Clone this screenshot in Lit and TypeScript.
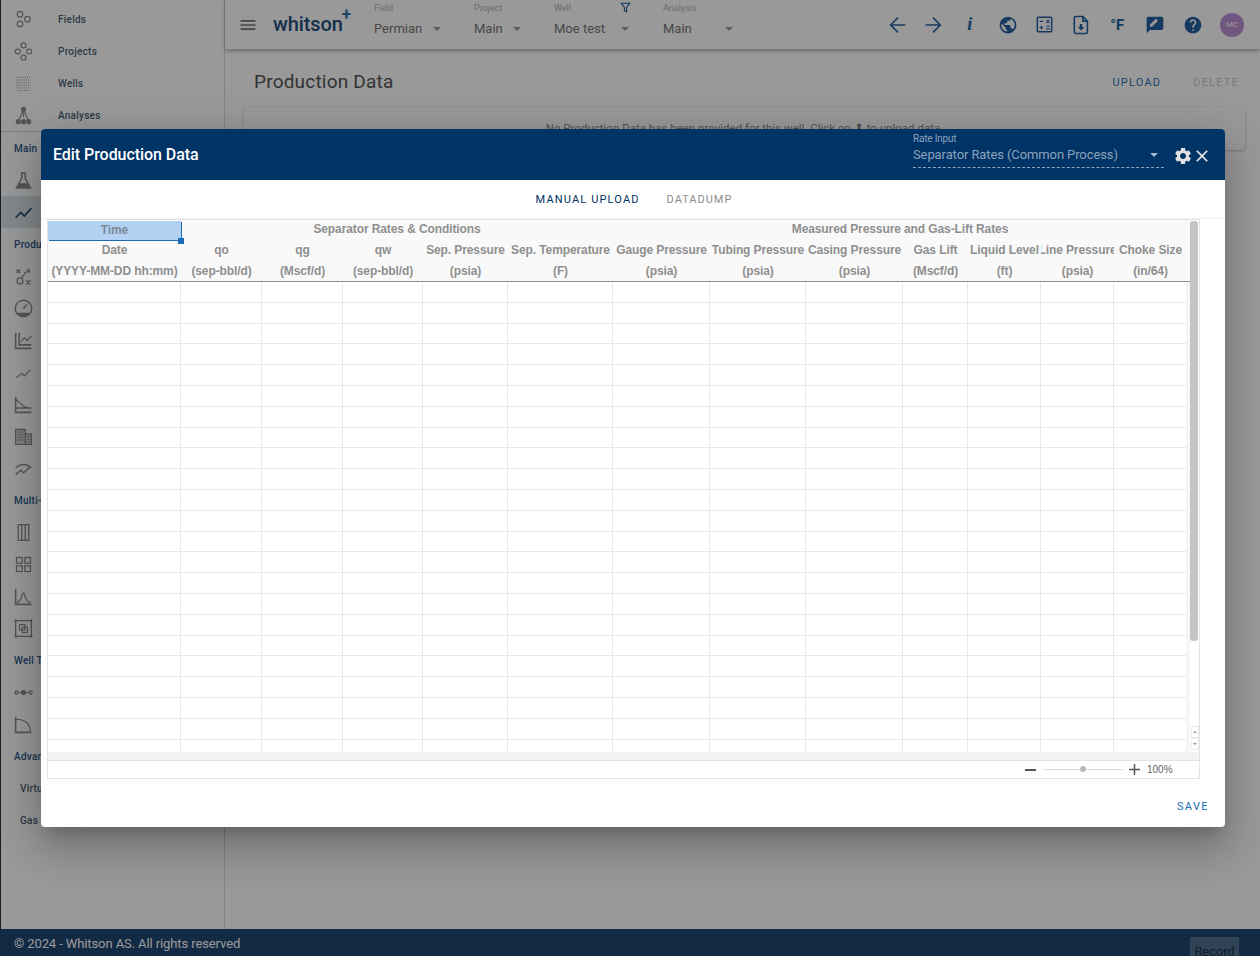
import { LitElement, html, css, svg, unsafeCSS } from "lit";
import { customElement } from "lit/decorators.js";

const ui = (d: unknown, size = 24, vb = "0 0 24 24") =>
  html`<svg class="ic" width=${size} height=${size} viewBox=${vb}>${d}</svg>`;

const MAT = {
  globe:
    "M12 2C6.48 2 2 6.48 2 12s4.48 10 10 10 10-4.48 10-10S17.52 2 12 2zm-1 17.93c-3.95-.49-7-3.85-7-7.93 0-.62.08-1.21.21-1.79L9 15v1c0 1.1.9 2 2 2v1.93zm6.9-2.54c-.26-.81-1-1.39-1.9-1.39h-1v-3c0-.55-.45-1-1-1H8v-2h2c.55 0 1-.45 1-1V7h2c1.1 0 2-.9 2-2v-.41c2.93 1.19 5 4.06 5 7.41 0 2.08-.8 3.97-2.1 5.39z",
  help: "M12 2C6.48 2 2 6.48 2 12s4.48 10 10 10 10-4.48 10-10S17.52 2 12 2zm1 17h-2v-2h2v2zm2.07-7.75l-.9.92C13.45 12.9 13 13.5 13 15h-2v-.5c0-1.1.45-2.1 1.17-2.83l1.24-1.26c.37-.36.59-.86.59-1.41 0-1.1-.9-2-2-2s-2 .9-2 2H8c0-2.21 1.79-4 4-4s4 1.79 4 4c0 .88-.36 1.68-.93 2.25z",
  gear: "M19.14 12.94c.04-.3.06-.61.06-.94 0-.32-.02-.64-.07-.94l2.03-1.58c.18-.14.23-.41.12-.61l-1.92-3.32c-.12-.22-.37-.29-.59-.22l-2.39.96c-.5-.38-1.03-.7-1.62-.94l-.36-2.54c-.04-.24-.24-.41-.48-.41h-3.84c-.24 0-.43.17-.47.41l-.36 2.54c-.59.24-1.13.57-1.62.94l-2.39-.96c-.22-.08-.47 0-.59.22L2.74 8.87c-.12.21-.08.47.12.61l2.03 1.58c-.05.3-.09.63-.09.94s.02.64.07.94l-2.03 1.58c-.18.14-.23.41-.12.61l1.92 3.32c.12.22.37.29.59.22l2.39-.96c.5.38 1.03.7 1.62.94l.36 2.54c.05.24.24.41.48.41h3.84c.24 0 .44-.17.47-.41l.36-2.54c.59-.24 1.13-.56 1.62-.94l2.39.96c.22.08.47 0 .59-.22l1.92-3.32c.12-.22.07-.47-.12-.61l-2.01-1.58zM12 15.6c-1.98 0-3.6-1.62-3.6-3.6s1.62-3.6 3.6-3.6 3.6 1.62 3.6 3.6-1.62 3.6-3.6 3.6z",
  close:
    "M19 6.41L17.59 5 12 10.59 6.41 5 5 6.41 10.59 12 5 17.59 6.41 19 12 13.41 17.59 19 19 17.59 13.41 12z",
  menu: "M3 18h18v-2H3v2zm0-5h18v-2H3v2zm0-7v2h18V6H3z",
  review:
    "M20 2H4c-1.1 0-2 .9-2 2v18l4-4h14c1.1 0 2-.9 2-2V4c0-1.1-.9-2-2-2zM6 14v-2.47l6.88-6.88c.2-.2.51-.2.71 0l1.77 1.77c.2.2.2.51 0 .71L8.47 14H6z",
};
const fill = (d: string) => svg`<path d=${d} fill="currentColor"></path>`;
const thin = (d: string) => svg`<path d=${d} fill="none" stroke="currentColor" stroke-width="1.7"></path>`;

const topIcons = [
  { w: 35, c: ui(thin("M20 12H4M12 4l-8 8 8 8"), 22) },
  { w: 35.5, c: ui(thin("M4 12h16M12 4l8 8-8 8"), 22) },
  { w: 37.5, c: html`<span class="ital">i</span>` },
  { w: 38, c: ui(fill(MAT.globe), 20) },
  {
    w: 36,
    c: ui(svg`<g fill="none" stroke="currentColor" stroke-width="1.7"><rect x="3.8" y="3.8" width="16.4" height="16.4" rx="1"></rect><path d="M6.5 8.5h4M14 7l3.5 3M17.5 7L14 10M6.5 15.5h4M8.5 13.5v4M14 14h4M14 17h4" stroke-width="1.4"></path></g>`, 21),
  },
  {
    w: 36,
    c: ui(svg`<path d="M6 2.8h8l5 5V20a1.3 1.3 0 0 1-1.3 1.3H6A1.3 1.3 0 0 1 4.7 20V4.1A1.3 1.3 0 0 1 6 2.8z M14 2.8v5h5" fill="none" stroke="currentColor" stroke-width="1.7"></path><path d="M10.7 11h2.6v3.3h2.2L12 18l-3.5-3.7h2.2z" fill="currentColor"></path>`, 22),
  },
  { w: 37.5, c: html`<span class="degf">°F</span>` },
  { w: 38, c: ui(fill(MAT.review), 20) },
  { w: 38.5, c: ui(fill(MAT.help), 20) },
  { w: 39, c: html`<span class="avatar">MC</span>` },
];

const selects = [
  { w: 100, label: "Field", value: "Permian", vw: 59 },
  { w: 80, label: "Project", value: "Main", vw: 39 },
  { w: 109, label: "Well", value: "Moe test", vw: 67, filter: true },
  { w: 80, label: "Analysis", value: "Main", vw: 62 },
];

const S = (inner: string) => svg`<g fill="none" stroke="currentColor" stroke-width="1.4" .innerHTML=${inner}></g>`;
const side = {
  fields: S('<circle cx="8" cy="6" r="3.2"/><circle cx="16.5" cy="11.5" r="3.2"/><circle cx="8" cy="17" r="3.2"/>'),
  projects: S('<circle cx="12" cy="5" r="2.8"/><circle cx="5.5" cy="12" r="2.8"/><circle cx="18.5" cy="12" r="2.8"/><circle cx="12" cy="19" r="2.8"/>'),
  wells: S('<path stroke-dasharray="1 1.2" stroke-width="1.1" d="M5 5h14M4 8h16M4 11h16M4 14h16M4 17h16M6 20h12"/>'),
  analyses: S('<path d="M12 5L6 19M12 5l6 14M12 5v9M9 12l-3 7M15 12l3 7" /><circle cx="12" cy="5" r="2.2" fill="currentColor"/><circle cx="6" cy="19" r="2.2" fill="currentColor"/><circle cx="12" cy="19" r="2.2" fill="currentColor"/><circle cx="18" cy="19" r="2.2" fill="currentColor"/>'),
  flask: S('<path stroke-width="1.8" d="M9 3.5h6M10 3.5v6L4 20.5h16L14 9.5v-6"/><path d="M7.5 15h9l2.5 5H5z" fill="currentColor" stroke="none"/>'),
  line: S('<path stroke-width="2" d="M3 18l6-6 4 4 8-9"/>'),
  trend: S('<path d="M4 18l6-5 3 3 7-7"/>'),
  xcurve: S('<path d="M4 4l4 4M8 4L4 8M15 16l5 5M20 16l-5 5M13 8l6-3M19 5l-2.5-1.5M19 5l-1 3"/><circle cx="8" cy="17" r="3.4"/><path d="M9.5 14L14 8"/>'),
  gauge: S('<circle cx="12" cy="12" r="9.5" stroke-width="1.6"/><path d="M12 12l4-5" stroke-width="1.6"/><path d="M5 17.5h14a9 9 0 0 1-14 0z" fill="currentColor"/>'),
  chart: S('<path stroke-width="1.8" d="M3 3v18h18M7 3v14h14"/><path d="M9 13l4-4 3 3 5-5"/>'),
  decline: S('<path stroke-width="1.8" d="M3 3v18h18"/><path d="M3 6l8 7q3 3 10 3M3 16h18" stroke-width="1.5"/>'),
  building: S('<path d="M3 21V4h11v17zM14 9h7v12h-7z" fill="currentColor" fill-opacity=".35" stroke-width="1.5"/><path stroke-width="1" d="M5 7h7M5 10h7M5 13h7M5 16h7M16 12h3M16 15h3M16 18h3"/>'),
  waves: S('<path stroke-width="1.6" d="M3 11q9-7 18 0M3 19l6-5 3 3 8-7"/>'),
  columns: S('<path stroke-width="1.5" d="M6 3h12v18H6zM10 3v18M14 3v18"/>'),
  grid4: S('<rect x="4" y="4" width="6.5" height="6.5"/><rect x="13.5" y="4" width="6.5" height="6.5"/><rect x="4" y="13.5" width="6.5" height="6.5"/><rect x="13.5" y="13.5" width="6.5" height="6.5"/>'),
  bell: S('<path stroke-width="1.8" d="M3 3v18h18"/><path stroke-width="1.4" d="M4 19q4-1 6-7t3-3q2 9 7 10"/>'),
  frame: S('<path stroke-width="1.5" d="M3 3h18v18H3z"/><rect x="7.5" y="7.5" width="6" height="6"/><rect x="10.5" y="10.5" width="6" height="6"/><path stroke-width="3" d="M2 3h2M20 3h2M2 21h2M20 21h2"/>'),
  chain: S('<circle cx="4" cy="12" r="1.8"/><circle cx="12" cy="12" r="2.2" fill="currentColor"/><circle cx="20" cy="12" r="1.8"/><path d="M6 12h4M14 12h4"/>'),
  quarter: S('<path stroke-width="1.8" d="M3 3v18h18"/><path d="M3 6q16 0 17 14"/>'),
};

const nav: Array<{ t: "item" | "head" | "text"; icon?: unknown; label?: string; active?: boolean }> = [
  { t: "item", icon: side.fields, label: "Fields" },
  { t: "item", icon: side.projects, label: "Projects" },
  { t: "item", icon: side.wells, label: "Wells" },
  { t: "item", icon: side.analyses, label: "Analyses" },
];
const nav2: typeof nav = [
  { t: "head", label: "Main" },
  { t: "item", icon: side.flask },
  { t: "item", icon: side.line, active: true },
  { t: "head", label: "Production" },
  { t: "item", icon: side.xcurve },
  { t: "item", icon: side.gauge },
  { t: "item", icon: side.chart },
  { t: "item", icon: side.trend },
  { t: "item", icon: side.decline },
  { t: "item", icon: side.building },
  { t: "item", icon: side.waves },
  { t: "head", label: "Multi-Well" },
  { t: "item", icon: side.columns },
  { t: "item", icon: side.grid4 },
  { t: "item", icon: side.bell },
  { t: "item", icon: side.frame },
  { t: "head", label: "Well Tests" },
  { t: "item", icon: side.chain },
  { t: "item", icon: side.quarter },
  { t: "head", label: "Advanced" },
  { t: "text", label: "Virtual" },
  { t: "text", label: "Gas" },
];

const COLS = [133, 81, 81, 80, 85, 105, 97, 96, 97, 65, 73, 73, 73];
const COLTPL = unsafeCSS(COLS.map((c) => c + "px").join(" "));
const H2 = ["Date", "qo", "qg", "qw", "Sep. Pressure", "Sep. Temperature", "Gauge Pressure", "Tubing Pressure", "Casing Pressure", "Gas Lift", "Liquid Level", "Line Pressure", "Choke Size"];
const H3 = ["(YYYY-MM-DD hh:mm)", "(sep-bbl/d)", "(Mscf/d)", "(sep-bbl/d)", "(psia)", "(F)", "(psia)", "(psia)", "(psia)", "(Mscf/d)", "(ft)", "(psia)", "(in/64)"];

@customElement("app-root")
export class AppRoot extends LitElement {
  static styles = css`
    :host {
      display: block;
      position: relative;
      width: 1260px;
      height: 956px;
      overflow: hidden;
      background: #fff;
      font-family: Roboto, "Liberation Sans", sans-serif;
    }
    .ic { display: block; }
    .page { display: flex; flex-direction: column; height: 956px; }
    .body { flex: 1; display: flex; min-height: 0; }
    .sidebar {
      width: 225px;
      box-sizing: border-box;
      border-left: 1px solid #303030;
      border-right: 1px solid #d5d5d5;
      padding-top: 3px;
      color: #555;
      flex: none;
    }
    .sidebar .group { border-bottom: 1px solid #cfcfcf; }
    .nav-item { height: 32px; display: flex; align-items: center; padding-left: 11.5px; gap: 24.5px; color: #8f8b8b; }
    .nav-item .ic { width: 21px; height: 21px; }
    .nav-item.active { background: #dde5eb; color: #24507f; }
    .nav-label { font-size: 10px; font-weight: 500; letter-spacing: 0.25px; color: #4d5f76; }
    .nav-head { height: 32px; display: flex; align-items: center; padding-left: 13px; font-size: 10px; font-weight: 500; letter-spacing: 0.25px; color: #2c5a8d; white-space: nowrap; }
    .nav-text { height: 32px; display: flex; align-items: center; padding-left: 19px; font-size: 10px; font-weight: 500; letter-spacing: 0.25px; color: #4d5f76; }
    .main { flex: 1; min-width: 0; display: flex; flex-direction: column; }
    .topbar {
      height: 49px;
      flex: none;
      display: flex;
      align-items: center;
      background: #fff;
      box-shadow: 0 2px 4px rgba(0, 0, 0, 0.3);
      padding-left: 11px;
      color: #25619e;
    }
    .burger { color: #777; width: 24px; margin-right: 13px; display: flex; justify-content: center; }
    .logo { width: 101px; display: flex; align-items: flex-start; height: 49px; color: #254f80; }
    .logo-word { font-size: 20px; font-weight: 500; letter-spacing: -0.1px; margin-top: 12px; color: #254f80; }
    .logo-plus { font-size: 17px; font-weight: 700; margin-top: 6px; margin-left: -1px; color: #2a70b0; line-height: 1; }
    .sel { position: relative; height: 49px; flex: none; }
    .sel-label { font-size: 9px; color: #b4b4b4; line-height: 12px; margin-top: 2px; }
    .sel-row { display: flex; align-items: center; margin-top: 7px; font-size: 13px; color: #777; line-height: 16px; }
    .caret { width: 0; height: 0; border-left: 4px solid transparent; border-right: 4px solid transparent; border-top: 4px solid #9a9a9a; }
    .filter { position: absolute; left: 65px; top: 1px; color: #25619e; }
    .icons { margin-left: auto; display: flex; align-items: center; padding-right: 8.5px; }
    .tb { display: flex; justify-content: center; align-items: center; height: 24px; color: #25619e; }
    .ital { font-family: "Liberation Serif", serif; font-style: italic; font-size: 18px; font-weight: 700; }
    .degf { font-size: 15px; font-weight: 700; }
    .avatar { width: 24px; height: 24px; border-radius: 50%; background: #bc8fd4; color: #fff; font-size: 8px; display: flex; align-items: center; justify-content: center; }
    .titlebar { display: flex; align-items: center; height: 58px; box-sizing: border-box; padding: 7px 21px 0 29px; flex: none; }
    .title { font-size: 19px; color: #555; letter-spacing: 0.2px; flex: 1; }
    .tbtn { font-size: 11px; letter-spacing: 1.2px; color: #2f73b5; margin: 2px 0 0 32px; }
    .tbtn.off { color: #c9c9c9; }
    .card { margin: 0 15px 0 19px; height: 43px; box-sizing: border-box; padding-bottom: 2px; flex: none; border-radius: 4px; box-shadow: 0 1px 3px rgba(0, 0, 0, 0.25); display: flex; align-items: center; justify-content: center; font-size: 11.5px; color: #888; }
    .footer { height: 27px; box-sizing: border-box; padding: 1px 0 0 14px; flex: none; background: #1e4672; color: #fff; display: flex; align-items: center; font-size: 13px; letter-spacing: -0.1px; overflow: hidden; position: relative; }
    .copy { flex: 1; }
    .record { width: 49px; height: 30px; margin: 18px 21px 0 0; box-sizing: border-box; border: 1px solid #57789b; background: #50708f; color: #1f3347; font-size: 13px; display: flex; justify-content: center; padding-top: 6px; }

    .overlay { position: absolute; inset: 0; background: rgba(0, 0, 0, 0.4); padding: 129px 0 0 41px; box-sizing: border-box; }
    .modal {
      width: 1184px;
      height: 698px;
      background: #fff;
      border-radius: 4px;
      box-shadow: 0 11px 15px -7px rgba(0, 0, 0, 0.2), 0 24px 38px 3px rgba(0, 0, 0, 0.14), 0 9px 46px 8px rgba(0, 0, 0, 0.12);
      display: flex;
      flex-direction: column;
      overflow: hidden;
    }
    .mhead { height: 51px; background: #003366; display: flex; align-items: center; padding-left: 12px; flex: none; }
    .mtitle { color: #fff; font-size: 16px; font-weight: 500; flex: 1; letter-spacing: -0.05px; }
    .rate { width: 251px; height: 38px; align-self: flex-start; border-bottom: 1px dashed #8ea4bd; box-sizing: border-box; margin-top: 1px; }
    .rate-label { font-size: 10px; color: #8da3bd; line-height: 12px; margin-top: 3px; letter-spacing: -0.2px; }
    .rate-row { display: flex; align-items: center; justify-content: space-between; color: #8da3bd; font-size: 13px; letter-spacing: -0.1px; line-height: 18px; margin-top: 1px; padding-right: 6px; }
    .rate-caret { border-left: 4.5px solid transparent; border-right: 4.5px solid transparent; border-top: 4.5px solid #a7b6c8; width: 0; height: 0; }
    .micons { display: flex; align-items: center; margin-left: 9px; margin-right: 13px; margin-top: 2px; }
    .gear { color: #e2e2e2; }
    .x { color: #e8e8e8; margin-left: -1px; }
    .tabs { height: 39px; flex: none; box-sizing: border-box; border-bottom: 1px solid #f3f3f3; display: flex; align-items: center; justify-content: center; gap: 27px; font-size: 11px; letter-spacing: 1.15px; padding-left: 2px; }
    .tab-on { color: #003366; }
    .tab-off { color: #8c8c8c; letter-spacing: 1px; }
    .sheet { margin-left: 6px; width: 1153px; height: 560px; flex: none; box-sizing: border-box; border: 1px solid #e3e3e3; display: flex; flex-direction: column; }
    .sheet-top { flex: 1; min-height: 0; display: flex; }
    .grid { flex: 1; min-width: 0; display: flex; flex-direction: column; overflow: hidden; background: #f5f5f5; }
    .hdr { height: 62px; flex: none; box-sizing: border-box; background: #f9f9f9; border-bottom: 1px solid #8e8e8e; position: relative; font-family: "Liberation Sans", Arial, sans-serif; font-weight: 700; font-size: 12px; letter-spacing: -0.1px; color: #8f8f8f; }
    .hrow { display: grid; grid-template-columns: ${COLTPL}; height: 20px; }
    .hrow.last { height: 21px; }
    .hrow.top .hcell { padding-bottom: 2px; box-sizing: border-box; }
    .hcell { display: flex; align-items: center; justify-content: center; white-space: nowrap; overflow: hidden; min-width: 0; }
    .hcell > span { flex: none; }
    .span-sep { grid-column: span 5; }
    .span-meas { grid-column: span 7; }
    .sel-cell { background: #b3d1f2; color: #7d8a99; height: 19px; margin-top: 1px; box-shadow: 1px 1px 0 #1f6bb0; overflow: visible; }
    .handle { position: absolute; left: 130px; top: 18px; width: 6px; height: 6px; background: #1a6db5; }
    .rows { flex: 1; min-height: 0; overflow: hidden; width: 1138px; background: #fff; }
    .row { display: grid; grid-template-columns: ${COLTPL}; height: 20.8px; box-sizing: border-box; border-bottom: 1px solid #e8e8e8; }
    .cell { border-right: 1px solid #e8e8e8; }
    .vbar { width: 9px; flex: none; background: #fff; position: relative; }
    .thumb { height: 420px; margin: 1px 1px 0 0; background: #c4c4c4; border-radius: 3px; }
    .arrows { position: absolute; right: 0; bottom: 2px; width: 8px; display: flex; flex-direction: column; }
    .arr { height: 12px; border: 1px solid #ececec; box-sizing: border-box; display: flex; align-items: center; justify-content: center; }
    .up { width: 0; height: 0; border-left: 2px solid transparent; border-right: 2px solid transparent; border-bottom: 2px solid #999; }
    .dn { width: 0; height: 0; border-left: 2px solid transparent; border-right: 2px solid transparent; border-top: 2px solid #999; }
    .hstrip { height: 8px; background: #f2f2f0; flex: none; border-bottom: 1px solid #e3e3e3; }
    .status { height: 17px; flex: none; display: flex; align-items: center; justify-content: flex-end; padding-right: 27px; gap: 7px; font-family: "Liberation Sans", Arial, sans-serif; font-size: 10px; color: #666; }
    .minus { width: 11px; height: 2px; background: #555; }
    .slider { width: 80px; height: 1px; background: #dcdcdc; position: relative; margin-right: -2px; }
    .knob { position: absolute; left: 37px; top: -3px; width: 6px; height: 6px; border-radius: 50%; background: #b9b9b9; }
    .plus { color: #555; width: 13px; height: 13px; }
    .pct { width: 25px; margin-left: -1px; }
    .mfoot { flex: 1; display: flex; align-items: center; justify-content: flex-end; padding: 6px 16px 0 0; }
    .save { font-size: 11px; letter-spacing: 1.4px; color: #1a6db5; }
  `;

  private navRow(n: (typeof nav)[number]) {
    if (n.t === "head") return html`<div class="nav-head">${n.label}</div>`;
    if (n.t === "text") return html`<div class="nav-text">${n.label}</div>`;
    return html`<div class="nav-item ${n.active ? "active" : ""}">
      ${ui(n.icon)}${n.label ? html`<span class="nav-label">${n.label}</span>` : ""}
    </div>`;
  }

  render() {
    const rows = Array.from({ length: 23 });
    return html`
      <div class="page">
        <div class="body">
          <aside class="sidebar">
            <div class="group">${nav.map((n) => this.navRow(n))}</div>
            ${nav2.map((n) => this.navRow(n))}
          </aside>
          <div class="main">
            <header class="topbar">
              <span class="burger">${ui(fill(MAT.menu), 20)}</span>
              <div class="logo"><span class="logo-word">whitson</span><span class="logo-plus">+</span></div>
              ${selects.map(
                (s) => html`<div class="sel" style="width:${s.w}px">
                  <div class="sel-label">${s.label}</div>
                  <div class="sel-row"><span style="width:${s.vw}px">${s.value}</span><span class="caret"></span></div>
                  ${s.filter
                    ? html`<span class="filter">${ui(svg`<path d="M4 4h16l-6 8v8l-4-2v-6z" fill="none" stroke="currentColor" stroke-width="2"></path>`, 13)}</span>`
                    : ""}
                </div>`
              )}
              <div class="icons">
                ${topIcons.map((i) => html`<span class="tb" style="width:${i.w}px">${i.c}</span>`)}
              </div>
            </header>
            <div class="titlebar">
              <span class="title">Production Data</span>
              <span class="tbtn">UPLOAD</span><span class="tbtn off">DELETE</span>
            </div>
            <div class="card">No Production Data has been provided for this well. Click on ⬆ to upload data.</div>
          </div>
        </div>
        <footer class="footer">
          <span class="copy">© 2024 - Whitson AS. All rights reserved</span>
          <span class="record">Record</span>
        </footer>
      </div>

      <div class="overlay">
        <div class="modal">
          <div class="mhead">
            <span class="mtitle">Edit Production Data</span>
            <div class="rate">
              <div class="rate-label">Rate Input</div>
              <div class="rate-row"><span>Separator Rates (Common Process)</span><span class="rate-caret"></span></div>
            </div>
            <div class="micons">
              <span class="gear">${ui(fill(MAT.gear), 20)}</span>
              <span class="x">${ui(fill(MAT.close), 20)}</span>
            </div>
          </div>
          <div class="tabs"><span class="tab-on">MANUAL UPLOAD</span><span class="tab-off">DATADUMP</span></div>
          <div class="sheet">
            <div class="sheet-top">
              <div class="grid">
                <div class="hdr">
                  <div class="hrow top">
                    <div class="hcell sel-cell"><span>Time</span></div>
                    <div class="hcell span-sep"><span>Separator Rates &amp; Conditions</span></div>
                    <div class="hcell span-meas"><span>Measured Pressure and Gas-Lift Rates</span></div>
                  </div>
                  <div class="hrow">${H2.map((t) => html`<div class="hcell"><span>${t}</span></div>`)}</div>
                  <div class="hrow last">${H3.map((t) => html`<div class="hcell"><span>${t}</span></div>`)}</div>
                  <div class="handle"></div>
                </div>
                <div class="rows">
                  ${rows.map(() => html`<div class="row">${COLS.map(() => html`<div class="cell"></div>`)}</div>`)}
                </div>
              </div>
              <div class="vbar">
                <div class="thumb"></div>
                <div class="arrows">
                  <div class="arr"><span class="up"></span></div>
                  <div class="arr"><span class="dn"></span></div>
                </div>
              </div>
            </div>
            <div class="hstrip"></div>
            <div class="status">
              <span class="minus"></span>
              <span class="slider"><span class="knob"></span></span>
              <span class="plus">${ui(svg`<path d="M6.5 1v11M1 6.5h11" stroke="currentColor" stroke-width="1.5" fill="none"></path>`, 13, "0 0 13 13")}</span>
              <span class="pct">100%</span>
            </div>
          </div>
          <div class="mfoot"><span class="save">SAVE</span></div>
        </div>
      </div>
    `;
  }
}
